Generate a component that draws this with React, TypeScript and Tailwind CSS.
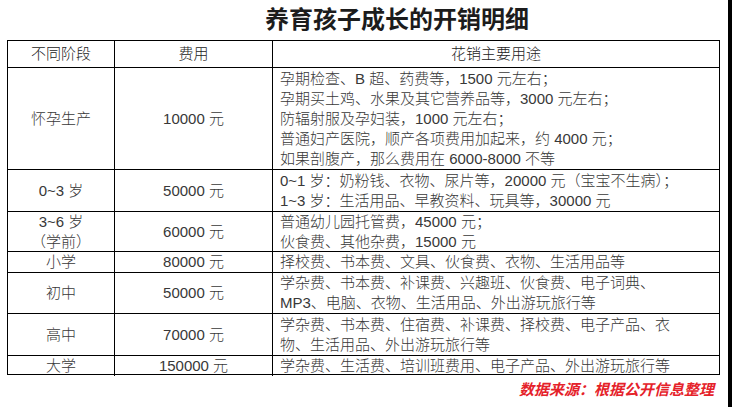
import React from "react";

const font = { fontFamily: '"Liberation Sans", "Noto Sans CJK SC", sans-serif' };

type Row = { stage: string[]; cost: string; uses: string[]; h: string; last?: boolean };

const rows: Row[] = [
  {
    stage: ["怀孕生产"],
    cost: "10000 元",
    uses: [
      "孕期检查、B 超、药费等，1500 元左右；",
      "孕期买土鸡、水果及其它营养品等，3000 元左右；",
      "防辐射服及孕妇装，1000 元左右；",
      "普通妇产医院，顺产各项费用加起来，约 4000 元；",
      "如果剖腹产，那么费用在 6000-8000 不等",
    ],
    h: "h-[102px]",
  },
  {
    stage: ["0~3 岁"],
    cost: "50000 元",
    uses: ["0~1 岁：奶粉钱、衣物、尿片等，20000 元（宝宝不生病）；", "1~3 岁：生活用品、早教资料、玩具等，30000 元"],
    h: "h-[42px]",
  },
  {
    stage: ["3~6 岁", "（学前）"],
    cost: "60000 元",
    uses: ["普通幼儿园托管费，45000 元；", "伙食费、其他杂费，15000 元"],
    h: "h-[40px]",
  },
  {
    stage: ["小学"],
    cost: "80000 元",
    uses: ["择校费、书本费、文具、伙食费、衣物、生活用品等"],
    h: "h-[21px]",
  },
  {
    stage: ["初中"],
    cost: "50000 元",
    uses: ["学杂费、书本费、补课费、兴趣班、伙食费、电子词典、", "MP3、电脑、衣物、生活用品、外出游玩旅行等"],
    h: "h-[41px]",
  },
  {
    stage: ["高中"],
    cost: "70000 元",
    uses: ["学杂费、书本费、住宿费、补课费、择校费、电子产品、衣", "物、生活用品、外出游玩旅行等"],
    h: "h-[42px]",
  },
  {
    stage: ["大学"],
    cost: "150000 元",
    uses: ["学杂费、生活费、培训班费用、电子产品、外出游玩旅行等"],
    h: "h-[18px]",
    last: true,
  },
];

export default function App() {
  return (
    <div className="flex h-[407px] w-[732px] overflow-hidden bg-white" style={font}>
      <div className="flex flex-1 flex-col">
        <div className="h-[40px] pl-[265px] text-[24px] font-bold leading-[40px] text-[#1c1c1c]">
          养育孩子成长的开销明细
        </div>
        <div className="ml-[7px] w-[713px] border border-black text-[15px] font-light leading-[20px] text-[#383838]">
          <div className="grid h-[27px] grid-cols-[107px_158px_1fr] border-b border-black text-[#222]">
            <div className="flex items-center justify-center border-r border-black">不同阶段</div>
            <div className="flex items-center justify-center border-r border-black">费用</div>
            <div className="flex items-center justify-center">花销主要用途</div>
          </div>
          {rows.map((r, i) => (
            <div
              key={i}
              className={`grid grid-cols-[107px_158px_1fr] ${r.h} ${r.last ? "" : "border-b border-black"}`}
            >
              <div className="flex flex-col items-center justify-center border-r border-black">
                {r.stage.map((s, j) => (
                  <div key={j}>{s}</div>
                ))}
              </div>
              <div className="flex items-center justify-center border-r border-black">{r.cost}</div>
              <div className="flex flex-col justify-center whitespace-nowrap pl-[7px]">
                {r.uses.map((u, j) => (
                  <div key={j}>{u}</div>
                ))}
              </div>
            </div>
          ))}
        </div>
        <div className="mt-[6px] flex w-[720px] justify-end pr-[6px] text-[15px] font-bold italic leading-[18px] text-[#e5222a]">
          数据来源：根据公开信息整理
        </div>
      </div>
      <div className="w-[4px] bg-black" />
    </div>
  );
}
